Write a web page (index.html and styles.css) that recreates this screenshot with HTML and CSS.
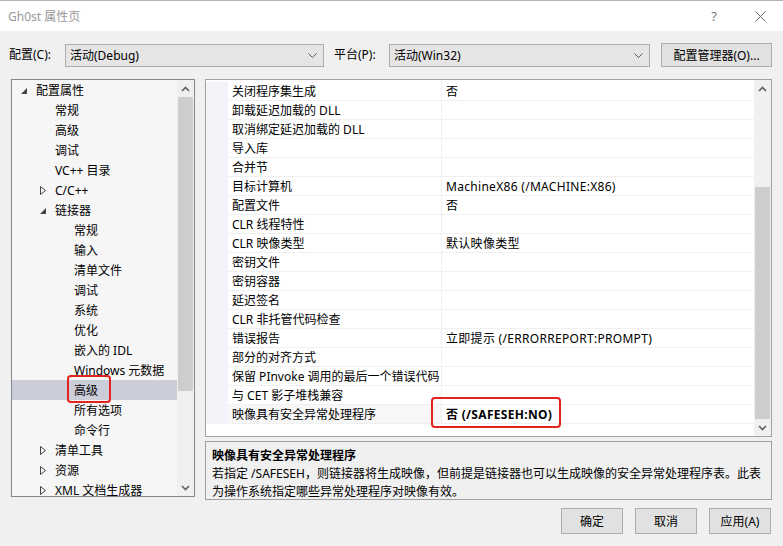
FILE: index.html
```html
<!DOCTYPE html>
<html lang="zh-CN">
<head>
<meta charset="utf-8">
<title>Gh0st 属性页</title>
<link rel="stylesheet" href="styles.css">
</head>
<body>
<div class="dialog">
  <div class="titlebar">
    <span class="title">Gh0st 属性页</span>
    <span class="tb-btn help">?</span>
    <span class="tb-btn close"><svg width="11" height="11" viewBox="0 0 11 11"><path d="M0.5 0.5 L10.5 10.5 M10.5 0.5 L0.5 10.5" stroke="#6a6a6a" stroke-width="1" fill="none"/></svg></span>
  </div>

  <div class="toolbar">
    <span class="lbl lbl-cfg">配置(C):</span>
    <div class="combo combo-cfg"><span>活动(Debug)</span><svg class="chev" width="9" height="5" viewBox="0 0 9 5"><polyline points="0.5,0.5 4.5,4.5 8.5,0.5" stroke="#555" fill="none"/></svg></div>
    <span class="lbl lbl-plat">平台(P):</span>
    <div class="combo combo-plat"><span>活动(Win32)</span><svg class="chev" width="9" height="5" viewBox="0 0 9 5"><polyline points="0.5,0.5 4.5,4.5 8.5,0.5" stroke="#555" fill="none"/></svg></div>
    <div class="btn btn-mgr">配置管理器(O)...</div>
  </div>

  <div class="main">
    <div class="tree">
      <div class="tree-items">
        <div class="node l0"><span class="tog"><svg width="6" height="6" viewBox="0 0 6 6"><polygon points="6,0 6,6 0,6" fill="#444"/></svg></span><span class="txt">配置属性</span></div>
        <div class="node l1"><span class="tog"></span><span class="txt">常规</span></div>
        <div class="node l1"><span class="tog"></span><span class="txt">高级</span></div>
        <div class="node l1"><span class="tog"></span><span class="txt">调试</span></div>
        <div class="node l1"><span class="tog"></span><span class="txt">VC++ 目录</span></div>
        <div class="node l1"><span class="tog"><svg width="6" height="9" viewBox="0 0 6 9"><polygon points="0.5,0.5 5.5,4.5 0.5,8.5" fill="none" stroke="#444"/></svg></span><span class="txt">C/C++</span></div>
        <div class="node l1"><span class="tog"><svg width="6" height="6" viewBox="0 0 6 6"><polygon points="6,0 6,6 0,6" fill="#444"/></svg></span><span class="txt">链接器</span></div>
        <div class="node l2"><span class="tog"></span><span class="txt">常规</span></div>
        <div class="node l2"><span class="tog"></span><span class="txt">输入</span></div>
        <div class="node l2"><span class="tog"></span><span class="txt">清单文件</span></div>
        <div class="node l2"><span class="tog"></span><span class="txt">调试</span></div>
        <div class="node l2"><span class="tog"></span><span class="txt">系统</span></div>
        <div class="node l2"><span class="tog"></span><span class="txt">优化</span></div>
        <div class="node l2"><span class="tog"></span><span class="txt">嵌入的 IDL</span></div>
        <div class="node l2"><span class="tog"></span><span class="txt">Windows 元数据</span></div>
        <div class="node l2 sel"><span class="tog"></span><span class="txt">高级</span><span class="mark mark-tree"></span></div>
        <div class="node l2"><span class="tog"></span><span class="txt">所有选项</span></div>
        <div class="node l2"><span class="tog"></span><span class="txt">命令行</span></div>
        <div class="node l1"><span class="tog"><svg width="6" height="9" viewBox="0 0 6 9"><polygon points="0.5,0.5 5.5,4.5 0.5,8.5" fill="none" stroke="#444"/></svg></span><span class="txt">清单工具</span></div>
        <div class="node l1"><span class="tog"><svg width="6" height="9" viewBox="0 0 6 9"><polygon points="0.5,0.5 5.5,4.5 0.5,8.5" fill="none" stroke="#444"/></svg></span><span class="txt">资源</span></div>
        <div class="node l1"><span class="tog"><svg width="6" height="9" viewBox="0 0 6 9"><polygon points="0.5,0.5 5.5,4.5 0.5,8.5" fill="none" stroke="#444"/></svg></span><span class="txt">XML 文档生成器</span></div>
      </div>
      <div class="vscroll tree-scroll">
        <div class="sb-btn"><svg width="9" height="6" viewBox="0 0 9 6"><polyline points="1,5 4.5,1.5 8,5" stroke="#606060" stroke-width="1.6" fill="none"/></svg></div>
        <div class="sb-track"><div class="thumb tree-thumb"></div></div>
        <div class="sb-btn"><svg width="9" height="6" viewBox="0 0 9 6"><polyline points="1,1 4.5,4.5 8,1" stroke="#606060" stroke-width="1.6" fill="none"/></svg></div>
      </div>
    </div>

    <div class="right">
      <div class="grid">
        <div class="rows">
          <div class="row"><span class="strip"></span><span class="name">关闭程序集生成</span><span class="val">否</span></div>
          <div class="row"><span class="strip"></span><span class="name">卸载延迟加载的 DLL</span><span class="val"></span></div>
          <div class="row"><span class="strip"></span><span class="name">取消绑定延迟加载的 DLL</span><span class="val"></span></div>
          <div class="row"><span class="strip"></span><span class="name">导入库</span><span class="val"></span></div>
          <div class="row"><span class="strip"></span><span class="name">合并节</span><span class="val"></span></div>
          <div class="row"><span class="strip"></span><span class="name">目标计算机</span><span class="val">MachineX86 (/MACHINE:X86)</span></div>
          <div class="row"><span class="strip"></span><span class="name">配置文件</span><span class="val">否</span></div>
          <div class="row"><span class="strip"></span><span class="name">CLR 线程特性</span><span class="val"></span></div>
          <div class="row"><span class="strip"></span><span class="name">CLR 映像类型</span><span class="val">默认映像类型</span></div>
          <div class="row"><span class="strip"></span><span class="name">密钥文件</span><span class="val"></span></div>
          <div class="row"><span class="strip"></span><span class="name">密钥容器</span><span class="val"></span></div>
          <div class="row"><span class="strip"></span><span class="name">延迟签名</span><span class="val"></span></div>
          <div class="row"><span class="strip"></span><span class="name">CLR 非托管代码检查</span><span class="val"></span></div>
          <div class="row"><span class="strip"></span><span class="name">错误报告</span><span class="val">立即提示 (/ERRORREPORT:PROMPT)</span></div>
          <div class="row"><span class="strip"></span><span class="name">部分的对齐方式</span><span class="val"></span></div>
          <div class="row"><span class="strip"></span><span class="name">保留 PInvoke 调用的最后一个错误代码</span><span class="val"></span></div>
          <div class="row"><span class="strip"></span><span class="name">与 CET 影子堆栈兼容</span><span class="val"></span></div>
          <div class="row row-sel"><span class="strip"></span><span class="name">映像具有安全异常处理程序</span><span class="val bold">否 (/SAFESEH:NO)<span class="mark mark-val"></span></span></div>
        </div>
        <div class="vscroll grid-scroll">
          <div class="sb-btn"><svg width="9" height="6" viewBox="0 0 9 6"><polyline points="1,5 4.5,1.5 8,5" stroke="#606060" stroke-width="1.6" fill="none"/></svg></div>
          <div class="sb-track"><div class="thumb grid-thumb"></div></div>
          <div class="sb-btn"><svg width="9" height="6" viewBox="0 0 9 6"><polyline points="1,1 4.5,4.5 8,1" stroke="#606060" stroke-width="1.6" fill="none"/></svg></div>
        </div>
      </div>
      <div class="desc">
        <div class="desc-title">映像具有安全异常处理程序</div>
        <div class="desc-text">若指定 /SAFESEH，则链接器将生成映像，但前提是链接器也可以生成映像的安全异常处理程序表。此表<br>为操作系统指定哪些异常处理程序对映像有效。</div>
      </div>
    </div>
  </div>

  <div class="buttons">
    <div class="btn btn-dlg">确定</div>
    <div class="btn btn-dlg">取消</div>
    <div class="btn btn-dlg">应用(A)</div>
  </div>
</div>
</body>
</html>
```

FILE: styles.css
```css
* { box-sizing: border-box; }
html, body { margin: 0; padding: 0; }
body {
  width: 783px;
  height: 546px;
  overflow: hidden;
  background: #f0f0f0;
  font-family: "Noto Sans", "Noto Sans CJK SC", sans-serif;
  font-size: 12px;
  color: #000;
}
.dialog { width: 783px; height: 546px; }

.titlebar {
  height: 31px;
  background: #fff;
  border-top: 1px solid #b4b4b4;
  display: flex;
  align-items: center;
  padding-left: 8px;
}
.title { color: #999; font-size: 12px; flex: 1; }
.tb-btn {
  width: 46px;
  height: 30px;
  display: flex;
  align-items: center;
  justify-content: center;
  color: #7a7a7a;
  font-size: 13px;
}

.toolbar {
  display: flex;
  align-items: center;
  height: 24px;
  margin-top: 12px;
  padding-left: 9px;
}
.lbl { line-height: 24px; }
.lbl-cfg { width: 56px; }
.lbl-plat { width: 55px; margin-left: 10px; }
.combo {
  height: 23px;
  border: 1px solid #acacac;
  background: #e5e5e5;
  display: flex;
  align-items: center;
  justify-content: space-between;
  padding: 0 6px 0 4px;
}
.combo-cfg { width: 259px; }
.combo-plat { width: 261px; }
.btn {
  border: 1px solid #adadad;
  background: #e1e1e1;
  display: flex;
  align-items: center;
  justify-content: center;
}
.btn-mgr { width: 111px; height: 24px; margin-left: 11px; }

.main {
  display: flex;
  align-items: flex-start;
  margin-top: 12px;
  padding-left: 11px;
  height: 421px;
}
.tree {
  width: 184px;
  height: 418px;
  border: 1px solid #828790;
  background: #f6f6f6;
  display: flex;
  overflow: hidden;
}
.tree-items { width: 165px; overflow: hidden; }
.node {
  height: 20px;
  display: flex;
  align-items: flex-start;
  white-space: nowrap;
  position: relative;
}
.txt { line-height: 22px; height: 20px; }
.node.l0 { padding-left: 5px; }
.node.l1 { padding-left: 24px; }
.node.l2 { padding-left: 43px; }
.node.sel { background: #cbcdd9; }
.tog {
  width: 19px;
  height: 20px;
  display: flex;
  align-items: center;
  padding-left: 4px;
  padding-top: 1px;
  flex: none;
}
.mark {
  position: absolute;
  border: 2px solid #e3231e;
  border-radius: 4px;
}
.mark-tree { left: 55px; top: -5px; width: 44px; height: 28px; }

.vscroll {
  width: 17px;
  background: #f0f0f0;
  display: flex;
  flex-direction: column;
  flex: none;
}
.sb-btn {
  height: 17px;
  display: flex;
  align-items: center;
  justify-content: center;
  flex: none;
}
.sb-track { flex: 1; padding: 0 1px; }
.thumb { background: #cdcdcd; }
.tree-thumb { height: 294px; }
.grid-thumb { height: 232px; margin-top: 90px; }

.right { width: 567px; margin-left: 10px; }
.grid {
  height: 358px;
  border: 1px solid #a0a0a0;
  background: #fff;
  display: flex;
}
.rows { flex: 1; padding-top: 2px; }
.row { display: flex; height: 19px; }
.strip { width: 22px; background: #f2f4f9; flex: none; }
.name {
  width: 214px;
  flex: none;
  border-right: 1px solid #f0f0f0;
  border-bottom: 1px solid #f0f0f0;
  padding-left: 4px;
  line-height: 19px;
  white-space: nowrap;
  overflow: hidden;
}
.val {
  flex: 1;
  border-bottom: 1px solid #f0f0f0;
  padding-left: 4px;
  line-height: 19px;
  white-space: nowrap;
  position: relative;
  letter-spacing: 0.3px;
}
.row-sel .name { background: #f7f7f7; }
.bold { font-weight: bold; }
.mark-val { left: -11px; top: -8px; width: 130px; height: 31px; }

.desc {
  margin-top: 4px;
  height: 59px;
  border: 1px solid #a0a0a0;
  background: #f0f0f0;
  padding: 5px 6px 0;
  line-height: 18px;
}
.desc-title { font-weight: bold; }

.buttons {
  display: flex;
  justify-content: flex-end;
  gap: 12px;
  padding-right: 12px;
  margin-top: 8px;
}
.btn-dlg { width: 62px; height: 26px; }
```
